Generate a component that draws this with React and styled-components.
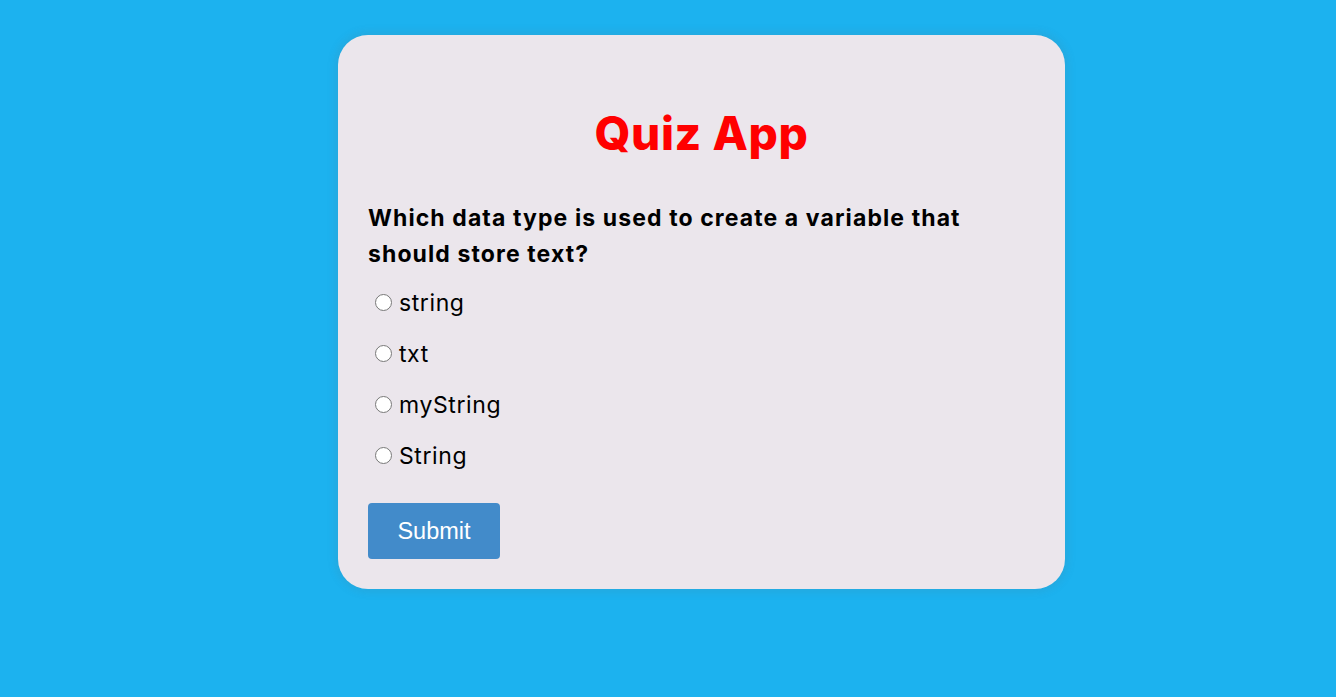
import styled, { createGlobalStyle } from "styled-components"

const GlobalStyle = createGlobalStyle`
  * {
    box-sizing: border-box;
  }

  body {
    margin: 0;
    background-color: #1cb2ef;
    font-family: "Inter", "Noto Sans", sans-serif;
    min-height: 100vh;
  }
`

const Page = styled.main`
  display: flex;
  justify-content: center;
  padding: 35px 0 0 67px;
`

const Card = styled.div`
  width: 727px;
  background-color: #ebe6ec;
  border-radius: 30px;
  box-shadow: 0 0 10px 2px rgba(100, 100, 100, 0.15);
  padding: 0 30px 30px;
`

const Title = styled.h1`
  margin: 0;
  padding: 66px 0 35px;
  font-size: 46px;
  line-height: 64px;
  font-weight: 800;
  letter-spacing: 0.6px;
  color: #ff0000;
  text-align: center;
`

const Question = styled.h2`
  margin: 0 0 5px;
  font-size: 23px;
  line-height: 36px;
  font-weight: 700;
  letter-spacing: 1.1px;
  color: #000;
`

const Options = styled.ul`
  list-style: none;
  margin: 0;
  padding: 0;
`

const Option = styled.li`
  display: flex;
  align-items: center;
  height: 51px;
  font-size: 23px;
  letter-spacing: 0.6px;
  color: #000;

  label {
    display: flex;
    align-items: center;
    gap: 7px;
    cursor: pointer;
  }

  input {
    width: 17px;
    height: 17px;
    margin: 0 0 0 7px;
  }
`

const Button = styled.button`
  margin-top: 22px;
  width: 132px;
  height: 56px;
  border: none;
  border-radius: 4px;
  background-color: #428bca;
  color: #fff;
  font-family: "Liberation Sans", Arial, sans-serif;
  font-size: 23.5px;
  cursor: pointer;
`

const answers = ["string", "txt", "myString", "String"]

export default function App() {
  return (
    <>
      <GlobalStyle />
      <Page>
        <Card>
          <Title>Quiz App</Title>
          <Question>
            Which data type is used to create a variable that should store text?
          </Question>
          <Options>
            {answers.map((a, i) => (
              <Option key={i}>
                <label>
                  <input type="radio" name="answer" value={a} />
                  {a}
                </label>
              </Option>
            ))}
          </Options>
          <Button>Submit</Button>
        </Card>
      </Page>
    </>
  )
}
